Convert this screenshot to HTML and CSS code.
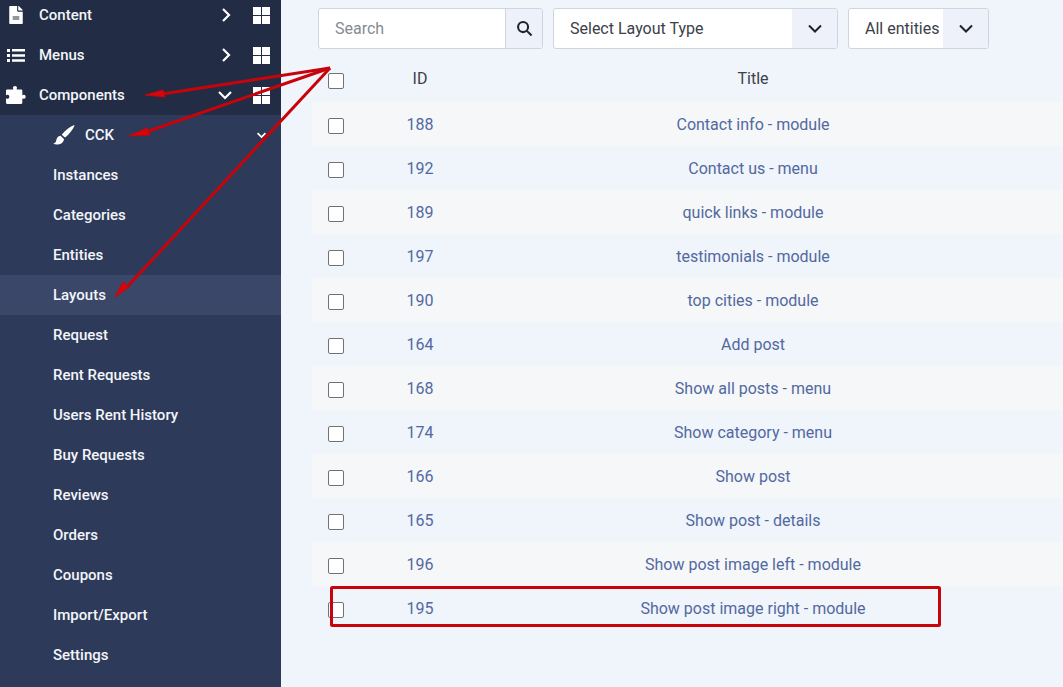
FILE: index.html
```html
<!DOCTYPE html>
<html lang="en">
<head>
<meta charset="utf-8">
<title>Layouts</title>
<link rel="stylesheet" href="styles.css">
</head>
<body>
<div class="app">
  <nav class="sidebar">
    <div class="item top">
      <svg class="ico" viewBox="0 0 384 512"><path fill="#fff" d="M224 136V0H24C10.700 0 0 10.700 0 24v464c0 13.300 10.700 24 24 24h336c13.300 0 24-10.700 24-24V160H248c-13.200 0-24-10.800-24-24zm64 236c0 6.600-5.400 12-12 12H108c-6.600 0-12-5.400-12-12v-8c0-6.600 5.400-12 12-12h168c6.600 0 12 5.400 12 12v8zm0-64v8c0 6.600-5.400 12-12 12H108c-6.600 0-12-5.400-12-12v-8c0-6.600 5.400-12 12-12h168c6.600 0 12 5.400 12 12zm96-186v6H256V0h6c6.400 0 12.500 2.500 17 7l98 98c4.500 4.500 7 10.600 7 16z"/></svg>
      <span class="label">Content</span>
      <svg class="chev" viewBox="0 0 14 14"><path d="M4 1l6 6-6 6"/></svg>
      <span class="grid"><i></i><i></i><i></i><i></i></span>
    </div>
    <div class="item top">
      <svg class="ico" viewBox="0 0 18 18"><path fill="#fff" d="M0 3h3v3H0zM5 3h13v2.400H5zM0 8h3v3H0zM5 8.300h13v2.400H5zM0 13h3v3H0zM5 13.300h13v2.400H5z"/></svg>
      <span class="label">Menus</span>
      <svg class="chev" viewBox="0 0 14 14"><path d="M4 1l6 6-6 6"/></svg>
      <span class="grid"><i></i><i></i><i></i><i></i></span>
    </div>
    <div class="item top">
      <svg class="ico" viewBox="0 0 576 512"><path fill="#fff" d="M519.400 249.400c-12.100 0-24 4.800-33.700 10.500-7 4.100-15.700-.9-15.700-9V128c0-17.700-14.300-32-32-32H315.100c-8.100 0-13.100-8.700-9-15.700 5.700-9.700 10.500-21.600 10.500-33.700C316.600 20.900 290.500 0 258.300 0s-58.300 20.900-58.300 46.600c0 12.100 4.800 24 10.500 33.700 4.100 7-.9 15.700-9 15.700H32C14.300 96 0 110.300 0 128v122.900c0 8.100 8.700 13.100 15.700 9 9.700-5.700 21.600-10.500 33.700-10.500 25.700 0 46.600 26.100 46.600 58.300S75.100 366 49.400 366c-12.100 0-24-4.800-33.700-10.500-7-4.100-15.700.9-15.700 9V480c0 17.700 14.300 32 32 32h406c17.700 0 32-14.300 32-32V364.500c0-8.100 8.700-13.100 15.700-9 9.700 5.700 21.600 10.500 33.700 10.500 25.700 0 46.600-26.100 46.600-58.300s-20.900-58.300-46.600-58.300z"/></svg>
      <span class="label">Components</span>
      <svg class="chev chev-down" viewBox="0 0 14 14"><path d="M1 4l6 6 6-6"/></svg>
      <span class="grid"><i></i><i></i><i></i><i></i></span>
    </div>
    <div class="sub">
      <div class="item cck">
        <svg class="brush" viewBox="0 0 24 24"><path fill="#fff" d="M23.500 1c-3.500.6-10.500 6-14 10.800l3.600 3C17.800 11 22.800 4.600 23.500 1zM8.300 12.700c-3 .5-4.300 2.500-4.700 5-.3 1.800-1.500 3.100-3.400 3.900 3.800 1.400 10.500 1.100 11.900-5.100z"/></svg>
        <span class="label">CCK</span>
        <svg class="chev small" viewBox="0 0 14 14"><path d="M2 4l5 5 5-5"/></svg>
      </div>
      <a class="item link">Instances</a>
      <a class="item link">Categories</a>
      <a class="item link">Entities</a>
      <a class="item link active">Layouts</a>
      <a class="item link">Request</a>
      <a class="item link">Rent Requests</a>
      <a class="item link">Users Rent History</a>
      <a class="item link">Buy Requests</a>
      <a class="item link">Reviews</a>
      <a class="item link">Orders</a>
      <a class="item link">Coupons</a>
      <a class="item link">Import/Export</a>
      <a class="item link">Settings</a>
      <a class="item link"></a>
    </div>
  </nav>

  <main class="main">
    <div class="toolbar">
      <div class="control search">
        <span class="field placeholder">Search</span>
        <span class="addon search-btn">
          <svg viewBox="0 0 18 18"><circle cx="7.500" cy="7.500" r="5.300"/><path d="M11.500 11.500l5 5"/></svg>
        </span>
      </div>
      <div class="control type">
        <span class="field">Select Layout Type</span>
        <span class="addon"><svg viewBox="0 0 16 10"><path d="M2 1.500l6 6 6-6"/></svg></span>
      </div>
      <div class="control entities">
        <span class="field">All entities</span>
        <span class="addon"><svg viewBox="0 0 16 10"><path d="M2 1.500l6 6 6-6"/></svg></span>
      </div>
    </div>

    <div class="table">
      <div class="row head"><span class="c-check"><i class="box"></i></span><span class="c-id">ID</span><span class="c-title">Title</span></div>
      <div class="row"><span class="c-check"><i class="box"></i></span><a class="c-id">188</a><a class="c-title">Contact info - module</a></div>
      <div class="row"><span class="c-check"><i class="box"></i></span><a class="c-id">192</a><a class="c-title">Contact us - menu</a></div>
      <div class="row"><span class="c-check"><i class="box"></i></span><a class="c-id">189</a><a class="c-title">quick links - module</a></div>
      <div class="row"><span class="c-check"><i class="box"></i></span><a class="c-id">197</a><a class="c-title">testimonials - module</a></div>
      <div class="row"><span class="c-check"><i class="box"></i></span><a class="c-id">190</a><a class="c-title">top cities - module</a></div>
      <div class="row"><span class="c-check"><i class="box"></i></span><a class="c-id">164</a><a class="c-title">Add post</a></div>
      <div class="row"><span class="c-check"><i class="box"></i></span><a class="c-id">168</a><a class="c-title">Show all posts - menu</a></div>
      <div class="row"><span class="c-check"><i class="box"></i></span><a class="c-id">174</a><a class="c-title">Show category - menu</a></div>
      <div class="row"><span class="c-check"><i class="box"></i></span><a class="c-id">166</a><a class="c-title">Show post</a></div>
      <div class="row"><span class="c-check"><i class="box"></i></span><a class="c-id">165</a><a class="c-title">Show post - details</a></div>
      <div class="row"><span class="c-check"><i class="box"></i></span><a class="c-id">196</a><a class="c-title">Show post image left - module</a></div>
      <div class="row"><span class="c-check"><i class="box"></i></span><a class="c-id">195</a><a class="c-title">Show post image right - module</a></div>
    </div>
  </main>

  <svg class="annotations" viewBox="0 0 1063 687" aria-hidden="true">
    <g fill="#d5060c" stroke="#c8040a" stroke-width="3">
      <path d="M330 68L162 94" fill="none"/>
      <path d="M330 68L146 132" fill="none"/>
      <path d="M330 68L127 287" fill="none"/>
      <path stroke-width="1" d="M145 95l18-5 2 7z"/>
      <path stroke-width="1" d="M129 136l18-8 3 7z"/>
      <path stroke-width="1" d="M115 297l8-15 6 5z"/>
    </g>
    <rect class="mark" x="331.500" y="587.500" width="608" height="38" rx="1"/>
  </svg>
</div>
</body>
</html>
```
FILE: styles.css
```css
* { box-sizing: border-box; }
html, body { margin: 0; height: 100%; overflow: hidden; }
body { font-family: Roboto, "Liberation Sans", sans-serif; color: #333; background: #f0f4fb; }

.app { position: relative; display: flex; width: 100%; height: 687px; overflow: hidden; }

.sidebar { flex: 0 0 281px; margin-top: -5px; background: #222c45; color: #f3f5f9; font-size: 15px; font-weight: 500; }
.item { display: flex; align-items: center; height: 40px; }
.top { padding-left: 6px; }
.top .ico { width: 20px; height: 18px; flex: none; }
.top .label { margin-left: 13px; flex: 1; }
.chev { flex: none; width: 14px; height: 14px; margin-right: 20px; fill: none; stroke: #fff; stroke-width: 2.200; }
.chev-down { margin-right: 21px; margin-left: -1px; }
.grid { flex: none; display: grid; grid-template-columns: 8px 8px; grid-template-rows: 8px 8px; gap: 1px; margin-right: 11px; }
.grid i { background: #fff; display: block; }

.sub { background: #2d3a5a; }
.cck { padding-left: 53px; }
.brush { width: 22px; height: 22px; flex: none; }
.cck .label { margin-left: 10px; flex: 1; }
.chev.small { width: 11px; height: 11px; margin-right: 14px; }
.link { padding-left: 53px; }
.active { background: #3a4768; }

.main { flex: 1; min-width: 0; padding: 8px 0 0 31px; font-size: 16px; }

.toolbar { display: flex; gap: 10px; padding-left: 6px; }
.control { display: flex; height: 41px; background: #fff; border: 1px solid #ced5e2; border-radius: 3px; overflow: hidden; }
.field { display: flex; align-items: center; flex: 1; padding-left: 16px; color: #3c4048; }
.placeholder { color: #868b93; }
.addon { display: flex; align-items: center; justify-content: center; background: #eef1f9; }
.addon svg { width: 16px; height: 10px; fill: none; stroke: #1c2230; stroke-width: 2; }
.search { width: 225px; }
.search-btn { width: 37px; border-left: 1px solid #ced5e2; }
.search-btn svg { width: 17px; height: 17px; stroke-width: 2.200; }
.type { width: 285px; }
.type .addon { width: 45px; }
.entities { width: 141px; }
.entities .addon { width: 45px; }

.table { margin-top: 6px; }
.row { display: flex; align-items: center; height: 44px; }
.head { height: 47px; color: #3c4048; }
.row:nth-child(even) { background: #f6f7f9; }
.c-check { flex: none; width: 50px; padding-left: 16px; padding-top: 4px; display: flex; }
.c-id { flex: none; width: 116px; text-align: center; color: #5269a0; }
.c-title { flex: none; width: 550px; text-align: center; color: #5269a0; }
.head .c-id, .head .c-title { color: #3c4048; }
.box { display: block; width: 16px; height: 16px; background: #fff; border: 1px solid #6f7278; border-radius: 2px; }

.annotations { position: absolute; left: 0; top: 0; width: 1063px; height: 687px; pointer-events: none; }
.mark { fill: none; stroke: #c8040a; stroke-width: 3; }
```
